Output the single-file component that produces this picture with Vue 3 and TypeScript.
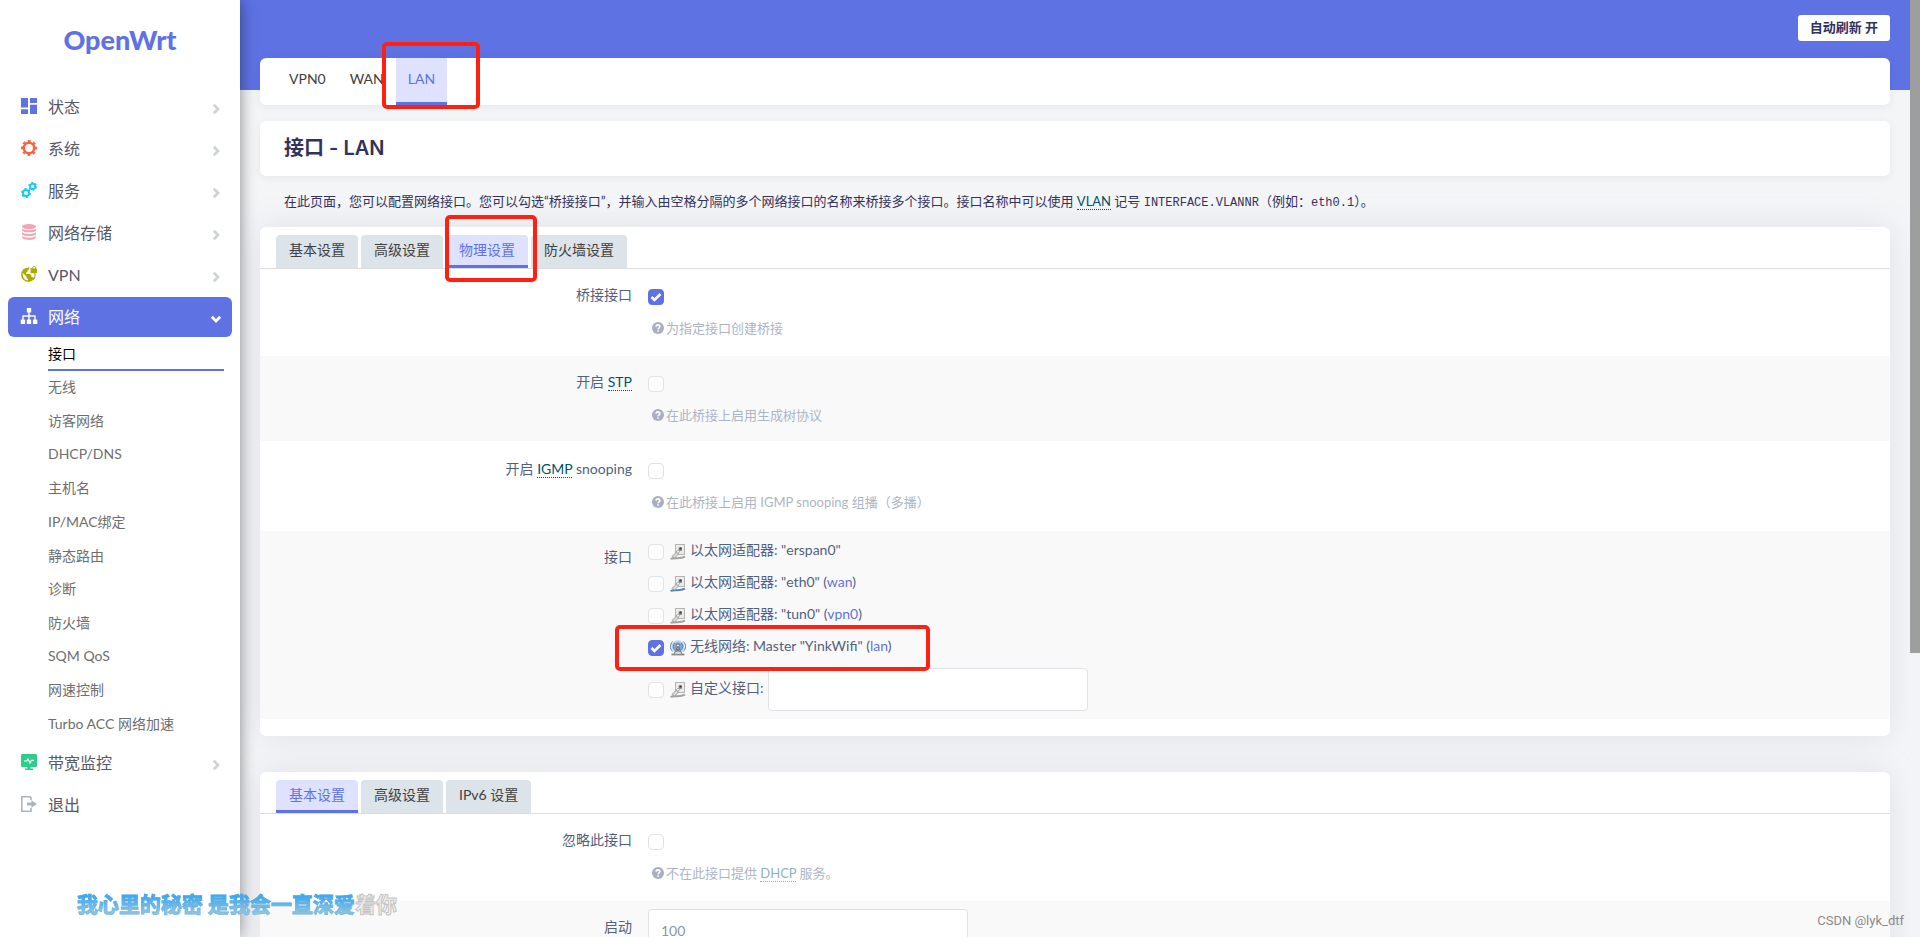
<script setup lang="ts">
import { ref } from 'vue'

interface MenuItem {
  label: string
  icon: string
  color: string
  expandable: boolean
  children?: string[]
}

interface Device {
  id: string
  text: string
  link?: string
  kind: 'wired' | 'wifi'
  up: boolean
  checked: boolean
}

const menu: MenuItem[] = [
  { label: '状态', icon: 'dashboard', color: '#5e72e4', expandable: true },
  { label: '系统', icon: 'gear', color: '#fb6340', expandable: true },
  { label: '服务', icon: 'gears', color: '#11cdef', expandable: true },
  { label: '网络存储', icon: 'database', color: '#f3a4b5', expandable: true },
  { label: 'VPN', icon: 'globe', color: '#aaaa00', expandable: true },
  {
    label: '网络',
    icon: 'sitemap',
    color: '#ffffff',
    expandable: true,
    children: [
      '接口', '无线', '访客网络', 'DHCP/DNS', '主机名', 'IP/MAC绑定',
      '静态路由', '诊断', '防火墙', 'SQM QoS', '网速控制', 'Turbo ACC 网络加速',
    ],
  },
  { label: '带宽监控', icon: 'monitor', color: '#2dce89', expandable: true },
  { label: '退出', icon: 'exit', color: '#adb5bd', expandable: false },
]

const interfaces = ['VPN0', 'WAN', 'LAN']
const settingTabs = ['基本设置', '高级设置', '物理设置', '防火墙设置']
const dhcpTabs = ['基本设置', '高级设置', 'IPv6 设置']

const activeInterface = ref('LAN')
const activeSetting = ref('物理设置')
const activeDhcp = ref('基本设置')

const bridge = ref(true)
const stp = ref(false)
const igmp = ref(false)
const ignore = ref(false)
const custom = ref(false)
const customName = ref('')
const start = ref('100')

const devices = ref<Device[]>([
  { id: 'erspan0', text: '以太网适配器: "erspan0"', kind: 'wired', up: false, checked: false },
  { id: 'eth0', text: '以太网适配器: "eth0"', link: 'wan', kind: 'wired', up: true, checked: false },
  { id: 'tun0', text: '以太网适配器: "tun0"', link: 'vpn0', kind: 'wired', up: false, checked: false },
  { id: 'wifi', text: '无线网络: Master "YinkWifi"', link: 'lan', kind: 'wifi', up: true, checked: true },
])
</script>

<template>
  <svg class="defs" aria-hidden="true">
    <symbol id="help" viewBox="0 0 12 12">
      <circle cx="6" cy="6" r="6" class="help-disc" />
      <path d="M4.1 4.7C4.2 2.3 7.9 2.4 7.9 4.5C7.9 5.9 6.1 5.7 6.1 7.2M6.1 8.2V9.7" fill="none" stroke="#fff" stroke-width="1.6" />
    </symbol>
    <symbol id="cable" viewBox="0 0 16 16">
      <rect x="5.5" y=".5" width="9" height="10" fill="#ececea" stroke="#b4b4b2" />
      <rect x="8.5" y="3.5" width="3.5" height="3.5" fill="#9a9a98" />
      <rect x="9.5" y="3.5" width="2" height="2" fill="#333" />
      <path d="M.5 15C4 12.8 9 15.8 15 12.6" fill="none" stroke="currentColor" stroke-width="2" />
      <path d="M2 12.5L6.5 8L8.5 10L4.5 14Z" fill="#e0e0de" stroke="#9b9b9b" />
      <path d="M6.2 8L8 6.2L9.5 7.7L8 9.5Z" fill="#fff" stroke="#888" stroke-width=".8" />
    </symbol>
  </svg>

  <div class="page">
    <aside class="sidebar">
      <a class="brand" href="#">OpenWrt</a>
      <nav>
        <ul class="menu">
          <li v-for="item in menu" :key="item.label" class="menu-item">
            <a href="#" class="menu-link" :class="{ open: item.children }">
              <svg class="menu-icon" viewBox="0 0 16 16" :style="{ color: item.color }" aria-hidden="true">
                <g v-if="item.icon === 'dashboard'" fill="currentColor">
                  <rect width="7" height="9.5" /><rect y="11.3" width="7" height="4.7" />
                  <rect x="9" width="7" height="5" /><rect x="9" y="6.7" width="7" height="9.3" />
                </g>
                <g v-else-if="item.icon === 'gear'" fill="none" stroke="currentColor">
                  <circle cx="8" cy="8" r="5.2" stroke-width="2.6" />
                  <circle cx="8" cy="8" r="7" stroke-width="2" stroke-dasharray="2.8 2.7" stroke-dashoffset="1.4" />
                </g>
                <g v-else-if="item.icon === 'gears'" fill="none" stroke="currentColor">
                  <circle cx="5" cy="11" r="3" stroke-width="2" />
                  <circle cx="5" cy="11" r="4.4" stroke-width="1.2" stroke-dasharray="2.3 2.3" />
                  <circle cx="11.6" cy="4.4" r="2.6" stroke-width="1.9" />
                  <circle cx="11.6" cy="4.4" r="3.8" stroke-width="1.2" stroke-dasharray="2 2" />
                </g>
                <g v-else-if="item.icon === 'database'" fill="currentColor">
                  <ellipse cx="8" cy="2.6" rx="7" ry="2.6" />
                  <path d="M1 4.4C3 6.7 13 6.7 15 4.4V6.4C14 9 2 9 1 6.4Z" />
                  <path d="M1 8.2C3 10.5 13 10.5 15 8.2V10.2C14 12.8 2 12.8 1 10.2Z" />
                  <path d="M1 12C3 14.3 13 14.3 15 12V13.6C14 16.8 2 16.8 1 13.6Z" />
                </g>
                <g v-else-if="item.icon === 'globe'">
                  <circle cx="7.4" cy="8.7" r="7.3" fill="currentColor" />
                  <path d="M1.8 7L5.6 10.8V12L7 13.3V14.6C3.6 14.2 1.2 11.4 1.8 7ZM8 2.2V3.6L6.4 4.6V6L5 6.8V8H9.2L10.4 9.4V11H11.6L12.4 12C14 10.4 13.7 8.4 13.2 7.2H9.6V2.2Z" fill="#fff" />
                  <rect x="10.5" y="2.5" width="5.5" height="4.5" rx=".8" fill="currentColor" />
                  <path d="M11.8 3V1.8C11.8 0 14.7 0 14.7 1.8V3" fill="none" stroke="currentColor" />
                </g>
                <g v-else-if="item.icon === 'sitemap'" fill="currentColor">
                  <rect x="5.8" y="0" width="4.4" height="4.4" /><rect x="-.3" y="11.6" width="4.4" height="4.4" />
                  <rect x="5.8" y="11.6" width="4.4" height="4.4" /><rect x="11.9" y="11.6" width="4.4" height="4.4" />
                  <path d="M8 4V12M2 12V8H14V12" fill="none" stroke="currentColor" stroke-width="1.4" />
                </g>
                <g v-else-if="item.icon === 'monitor'">
                  <rect width="16" height="13" rx="1.2" fill="currentColor" />
                  <path d="M6.5 13H9.5V14.6H12V16H4V14.6H6.5Z" fill="currentColor" />
                  <path d="M3 7H5.6L7 5L9 9L10.4 6.4H13" fill="none" stroke="#fff" stroke-width="1.2" />
                </g>
                <g v-else fill="none" stroke="currentColor">
                  <path d="M10 4V1.6L9 .8H.8V15.2H10V12" stroke-width="1.6" />
                  <path d="M6 6.6H10.4V4.2L16 8L10.4 11.8V9.6H6Z" fill="currentColor" stroke="none" />
                </g>
              </svg>
              <span>{{ item.label }}</span>
              <svg v-if="item.expandable" class="chevron" viewBox="0 0 12 12" aria-hidden="true">
                <path :d="item.children ? 'M1.8 3.8L6 8L10.2 3.8' : 'M3.8 1.8L8 6L3.8 10.2'" fill="none" stroke="currentColor" stroke-width="2.8" />
              </svg>
            </a>
            <ul v-if="item.children" class="submenu">
              <li v-for="(child, i) in item.children" :key="child" :class="{ current: i === 0 }">
                <a href="#">{{ child }}</a>
              </li>
            </ul>
          </li>
        </ul>
      </nav>
    </aside>

    <main class="main">
      <header class="banner">
        <button type="button" class="refresh">自动刷新 开</button>
      </header>

      <div class="content">
        <nav class="card flat iface-tabs">
          <a
            v-for="name in interfaces"
            :key="name"
            href="#"
            :class="{ active: name === activeInterface }"
            @click.prevent="activeInterface = name"
          >{{ name }}</a>
          <span class="mark mark-iface"></span>
        </nav>

        <h2 class="card flat title">接口 - LAN</h2>

        <p class="intro">在此页面，您可以配置网络接口。您可以勾选“桥接接口”，并输入由空格分隔的多个网络接口的名称来桥接多个接口。接口名称中可以使用 <abbr>VLAN</abbr> 记号 <code>INTERFACE.VLANNR</code>（例如：<code>eth0.1</code>）。</p>

        <section class="card physical">
          <div class="tabs">
            <button
              v-for="tab in settingTabs"
              :key="tab"
              type="button"
              :class="{ active: tab === activeSetting }"
              @click="activeSetting = tab"
            >{{ tab }}</button>
            <span class="mark mark-tab"></span>
          </div>

          <div class="row">
            <label class="name" for="bridge">桥接接口</label>
            <div class="field">
              <input id="bridge" v-model="bridge" type="checkbox" />
              <p class="hint"><svg><use href="#help" /></svg><span>为指定接口创建桥接</span></p>
            </div>
          </div>
          <div class="row compact">
            <label class="name" for="stp">开启 <abbr>STP</abbr></label>
            <div class="field">
              <input id="stp" v-model="stp" type="checkbox" />
              <p class="hint"><svg><use href="#help" /></svg><span>在此桥接上启用生成树协议</span></p>
            </div>
          </div>
          <div class="row tall">
            <label class="name" for="igmp">开启 <abbr>IGMP</abbr> snooping</label>
            <div class="field">
              <input id="igmp" v-model="igmp" type="checkbox" />
              <p class="hint"><svg><use href="#help" /></svg><span>在此桥接上启用 IGMP snooping 组播（多播）</span></p>
            </div>
          </div>
          <div class="row">
            <span class="name">接口</span>
            <ul class="devices">
              <li v-for="device in devices" :key="device.id">
                <input :id="device.id" v-model="device.checked" type="checkbox" />
                <svg v-if="device.kind === 'wired'" class="device-icon" :class="{ up: device.up }"><use href="#cable" /></svg>
                <svg v-else class="device-icon" viewBox="0 0 16 16">
                  <circle cx="8" cy="6.5" r="6.2" fill="#b9d0e8" />
                  <circle cx="8" cy="6.5" r="4" fill="#7ba6d4" />
                  <path d="M2.6 1.5C-.2 4.5-.2 8.5 2.6 11.5M13.4 1.5C16.2 4.5 16.2 8.5 13.4 11.5M4.6 3C2.8 5 2.8 8 4.6 10M11.4 3C13.2 5 13.2 8 11.4 10" fill="none" stroke="#4a7db5" />
                  <path d="M8 5.5L4 14M8 5.5L12 14M6.3 9.5H9.7M5.2 12L10 9.5M10.8 12L6 9.5" fill="none" stroke="#777" />
                  <circle cx="8" cy="5.5" r="1.5" fill="#eee" stroke="#555" stroke-width=".7" />
                  <path d="M1.5 14.5H14.5" stroke="#8b8b8b" stroke-width="1.8" />
                </svg>
                <label :for="device.id">{{ device.text }}<template v-if="device.link"> (<a href="#">{{ device.link }}</a>)</template></label>
                <span v-if="device.kind === 'wifi'" class="mark mark-device"></span>
              </li>
              <li class="custom">
                <input id="custom" v-model="custom" type="checkbox" />
                <svg class="device-icon"><use href="#cable" /></svg>
                <label for="custom">自定义接口:</label>
                <input v-model="customName" type="text" aria-label="自定义接口" />
              </li>
            </ul>
          </div>
        </section>

        <section class="card dhcp">
          <div class="tabs">
            <button
              v-for="tab in dhcpTabs"
              :key="tab"
              type="button"
              :class="{ active: tab === activeDhcp }"
              @click="activeDhcp = tab"
            >{{ tab }}</button>
          </div>
          <div class="row">
            <label class="name" for="ignore">忽略此接口</label>
            <div class="field">
              <input id="ignore" v-model="ignore" type="checkbox" />
              <p class="hint"><svg><use href="#help" /></svg><span>不在此接口提供 <abbr>DHCP</abbr> 服务。</span></p>
            </div>
          </div>
          <div class="row">
            <label class="name" for="start">启动</label>
            <div class="field entry">
              <input id="start" v-model="start" type="text" />
            </div>
          </div>
        </section>
      </div>
    </main>

    <div class="scroll-track"><div class="scroll-thumb"></div></div>

    <div class="lyric"><span class="sung">我心里的秘密 是我会一直深爱</span><span class="unsung">着你</span></div>
    <div class="watermark">CSDN @lyk_dtf</div>
  </div>
</template>

<style>
body {
  background: #f4f5f7;
  overflow: hidden;
}
</style>

<style scoped>
* {
  box-sizing: border-box;
}

.defs {
  position: absolute;
  width: 0;
  height: 0;
}

.page {
  position: relative;
  display: flex;
  height: 100vh;
  overflow: hidden;
  background: #f4f5f7;
  color: #525f7f;
  font-family: Lato, 'Noto Sans CJK SC', sans-serif;
  font-size: 14px;
}

ul {
  margin: 0;
  padding: 0;
  list-style: none;
}

a {
  color: #5e72e4;
  text-decoration: none;
}

abbr {
  color: #00526b;
  border-bottom: 1px dotted currentColor;
}

/* Sidebar */
.sidebar {
  z-index: 2;
  flex: none;
  width: 240px;
  background: #fff;
  box-shadow: 0 0 15px rgba(0, 0, 0, 0.45);
}

.brand {
  display: flex;
  align-items: center;
  justify-content: center;
  height: 86px;
  padding-bottom: 8px;
  font-size: 27px;
  font-weight: 900;
}

.menu-item {
  padding: 1px 8px;
}

.menu-link {
  display: flex;
  align-items: center;
  height: 40px;
  padding: 0 8px 2px 13px;
  border-radius: 6px;
  color: #55576a;
  font-size: 16px;
}

.menu-link.open {
  background: #5e72e4;
  color: #fff;
}

.menu-icon {
  width: 16px;
  height: 16px;
  margin-right: 11px;
  overflow: visible;
}

.chevron {
  width: 12px;
  height: 12px;
  margin: 6px 2px 0 auto;
  color: #ced4da;
}

.open .chevron {
  color: #fff;
}

.submenu {
  display: grid;
  grid-auto-rows: 1fr;
  min-height: 404px;
  padding-left: 40px;
}

.submenu li {
  display: flex;
  align-items: center;
  margin-right: 8px;
  border-bottom: 2px solid transparent;
}

.submenu a {
  color: #6e6e6e;
}

.submenu .current {
  border-color: #5e72e4;
}

.submenu .current a {
  color: #000;
}

/* Main column */
.main {
  flex: 1;
  min-width: 0;
}

.banner {
  display: flex;
  justify-content: flex-end;
  align-items: flex-start;
  height: 90px;
  padding: 15px 20px;
  background: #5e72e4;
}

.refresh {
  height: 26px;
  padding: 0 12px 4px;
  border: 0;
  border-radius: 3px;
  background: #fff;
  color: #32325d;
  font: bold 13px Lato, 'Noto Sans CJK SC', sans-serif;
}

.content {
  margin-top: -32px;
  padding: 0 20px;
}

.card {
  border-radius: 6px;
  background: #fff;
  box-shadow: 0 0 32px rgba(136, 152, 170, 0.2);
}

.flat {
  position: relative;
  box-shadow: 0 2px 10px rgba(0, 0, 0, 0.06);
}

.iface-tabs {
  display: flex;
  height: 47px;
  padding-left: 17px;
}

.iface-tabs a {
  padding: 0 12px;
  border-bottom: 3px solid transparent;
  color: #404040;
  line-height: 42px;
}

.iface-tabs .active {
  border-color: #5e72e4;
  background: #dee2ff;
  color: #5e72e4;
}

.title {
  margin: 16px 0 0;
  padding: 0 24px;
  color: #32325d;
  font-family: Inter, 'Noto Sans CJK SC', sans-serif;
  font-size: 20px;
  font-weight: 600;
  line-height: 55px;
}

.intro {
  margin: 0;
  padding: 13px 24px 14px;
  color: #32325d;
  font-size: 13px;
  line-height: 24px;
}

.intro code {
  font: 12px 'Liberation Mono', monospace;
}

.tabs {
  position: relative;
  display: flex;
  gap: 3px;
  padding: 8px 16px 0;
  border-bottom: 1px solid #dcdde1;
}

.tabs button {
  height: 33px;
  padding: 0 13px 3px;
  border: 0;
  border-bottom: 3px solid #dce3e9;
  border-radius: 4px 4px 0 0;
  background: #dce3e9;
  color: #404040;
  font: 14px Lato, 'Noto Sans CJK SC', sans-serif;
}

.tabs .active {
  border-color: #5e72e4;
  background: #dee2ff;
  color: #5e72e4;
}

.physical {
  padding-bottom: 17px;
}

.dhcp {
  margin-top: 36px;
}

.row {
  display: grid;
  grid-template-columns: 372px 1fr;
  column-gap: 16px;
  min-height: 87px;
}

.row:nth-child(odd) {
  background: #f9f9f9;
}

.compact {
  min-height: 85px;
}

.tall {
  min-height: 90px;
  padding-top: 2px;
}

.name {
  padding-top: 15px;
  text-align: right;
  line-height: 22px;
}

.field {
  padding-top: 20px;
}

.entry {
  padding-top: 8px;
}

input[type='checkbox'] {
  display: block;
  flex: none;
  appearance: none;
  width: 16px;
  height: 16px;
  margin: 0;
  border: 1px solid #dee2e6;
  border-radius: 4px;
  background: #fff;
}

input[type='checkbox']:checked {
  border-color: #5e72e4;
  background: #5e72e4 url("data:image/svg+xml,%3Csvg xmlns='http://www.w3.org/2000/svg' viewBox='0 0 16 16'%3E%3Cpath d='M3.5 8L6.5 11L12.5 5' fill='none' stroke='white' stroke-width='2.6'/%3E%3C/svg%3E") center / 16px 16px;
}

input[type='text'] {
  width: 320px;
  height: 43px;
  padding: 0 12px;
  border: 1px solid #dee2e6;
  border-radius: 4px;
  background: #fff;
  color: #8898aa;
  font: 14px Lato, sans-serif;
}

.hint {
  display: flex;
  align-items: center;
  gap: 2px;
  margin: 12px 0 0 4px;
  color: #adb5c5;
  font-size: 13px;
  line-height: 22px;
}

.hint svg {
  width: 12px;
  height: 12px;
}

.hint abbr {
  color: #8fb0bd;
}

.help-disc {
  fill: #a9aec0;
}

.devices {
  padding: 5px 0 8px;
}

.devices li {
  position: relative;
  display: flex;
  align-items: center;
  height: 32px;
}

.devices label {
  padding-bottom: 6px;
}

.devices .custom {
  height: 43px;
  margin-top: 4px;
}

.custom input[type='text'] {
  margin-left: 4px;
}

.device-icon {
  width: 16px;
  height: 16px;
  margin: 0 4px 0 6px;
  color: #a3a3a3;
}

.device-icon.up {
  color: #5584bd;
}

/* Red highlight frames laid over the controls */
.mark {
  position: absolute;
  z-index: 1;
  border: 4px solid #ff2012;
  border-radius: 5px;
  pointer-events: none;
}

.mark-iface {
  top: -16px;
  left: 122px;
  width: 98px;
  height: 67px;
}

.mark-tab {
  top: -12px;
  left: 185px;
  width: 92px;
  height: 67px;
}

.mark-device {
  top: -7px;
  left: -33px;
  width: 315px;
  height: 46px;
}

.scroll-track {
  flex: none;
  width: 10px;
  background: #f3f4f7;
}

.scroll-thumb {
  height: 653px;
  background: #9e9e9e;
}

/* Floating overlays */
.lyric {
  position: absolute;
  z-index: 3;
  left: 77px;
  bottom: 18px;
  font-size: 21px;
  font-weight: 700;
  line-height: 30px;
}

.sung {
  background: linear-gradient(#3fa9f0 25%, #8fc4e2 80%);
  background-clip: text;
  color: transparent;
  -webkit-text-stroke: 1px #5aa9dc66;
}

.unsung {
  color: #f0f0f0;
  -webkit-text-stroke: 1px #c4c4c4;
}

.watermark {
  position: absolute;
  z-index: 3;
  right: 16px;
  bottom: 6px;
  color: #8a8a8c;
  font: 13px/20px Roboto, sans-serif;
}
</style>
